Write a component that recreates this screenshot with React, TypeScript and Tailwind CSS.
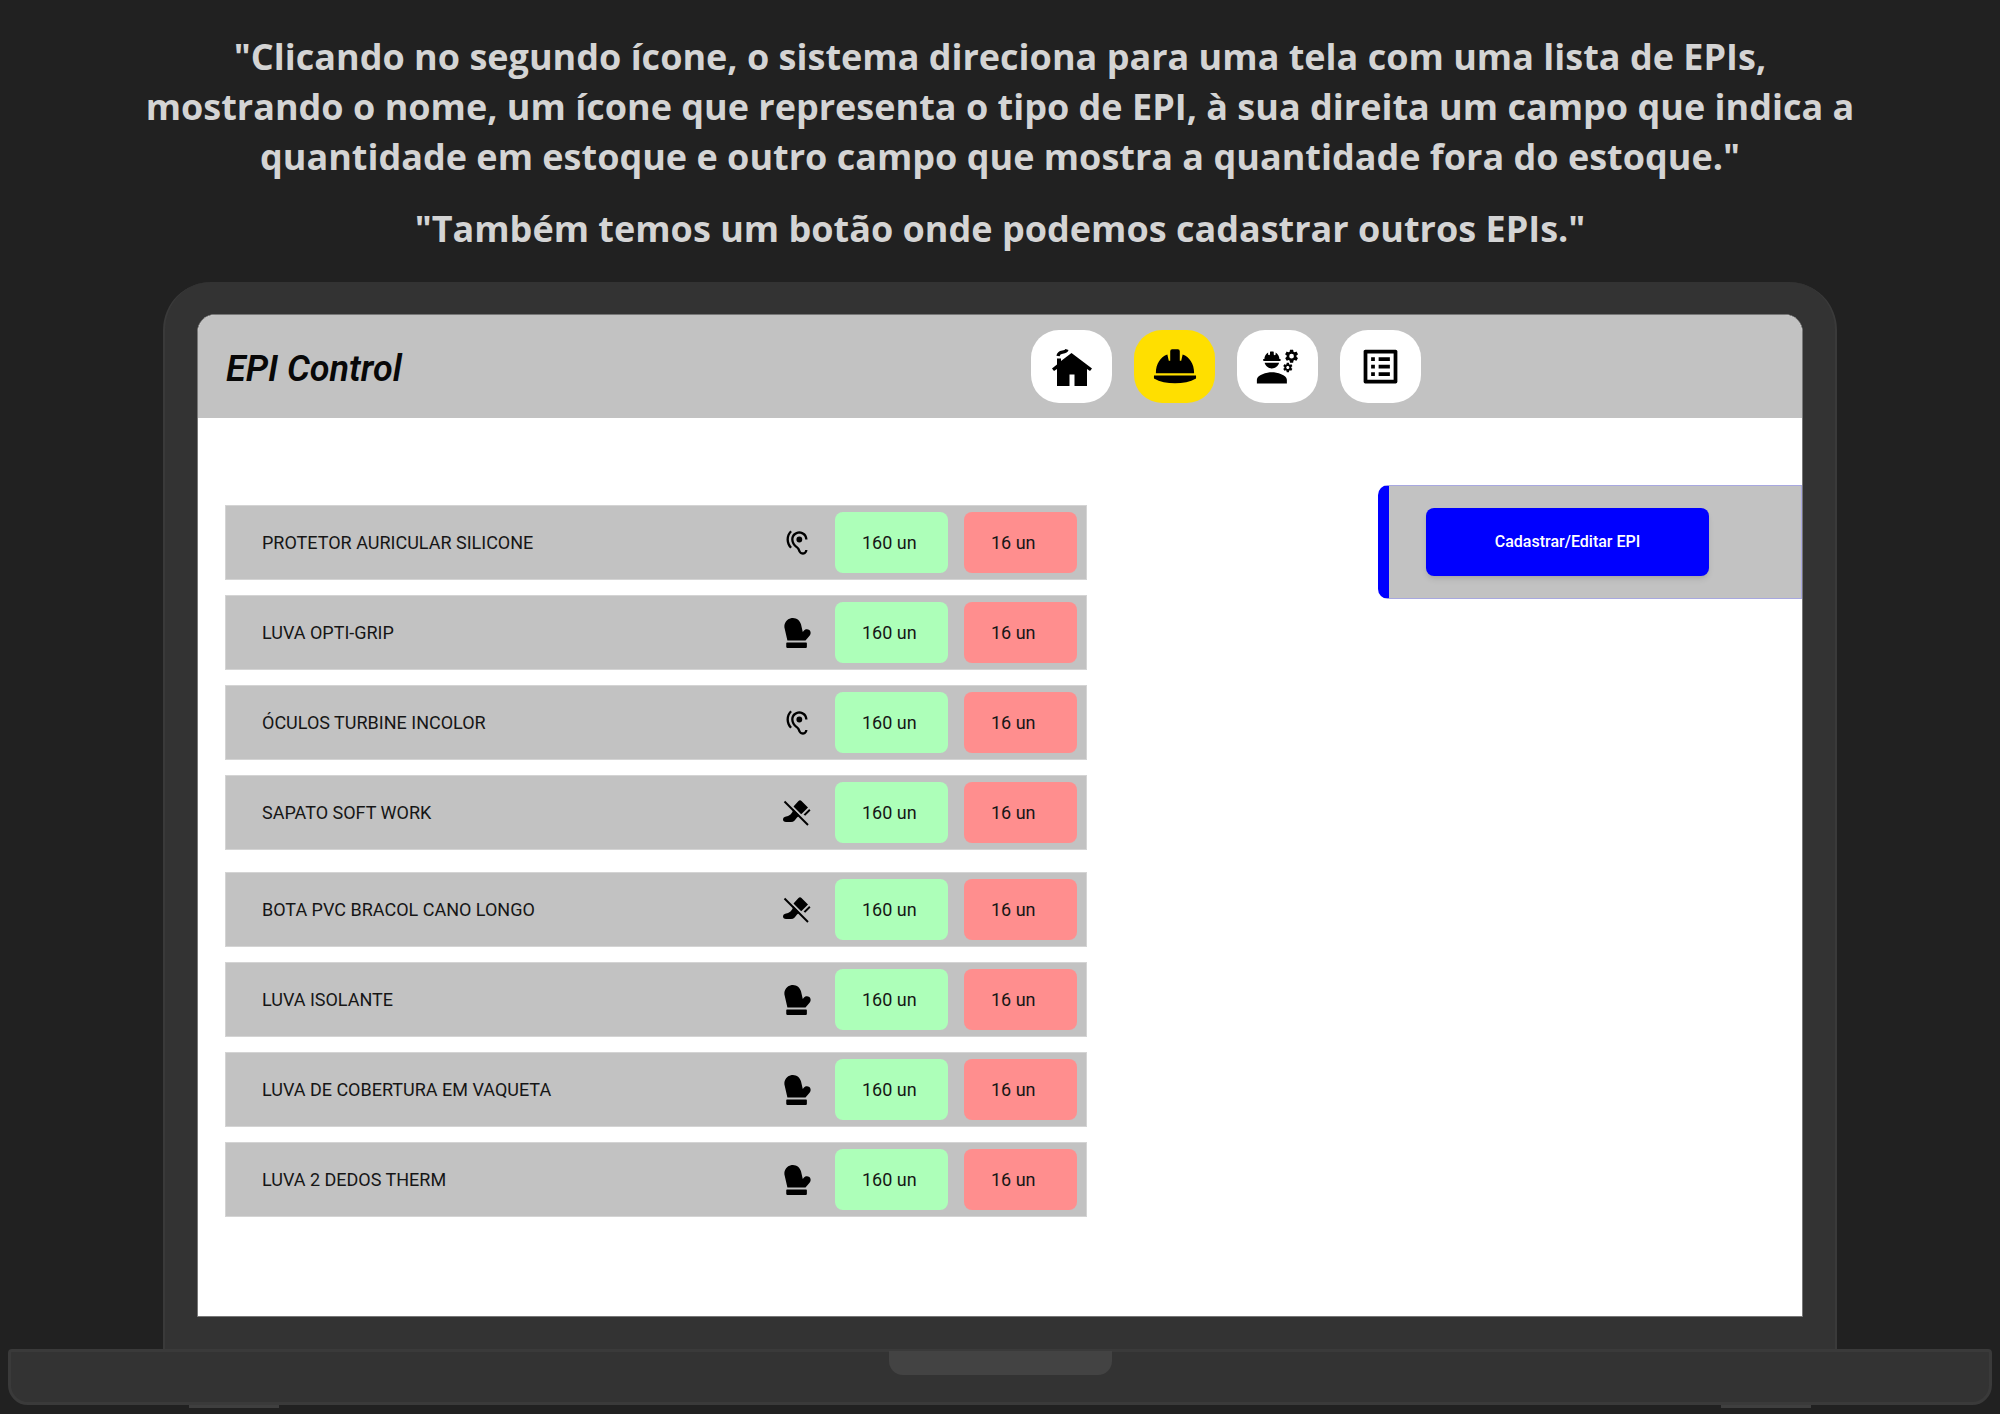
import { FaMitten } from "react-icons/fa";
import { MdEngineering, MdHearing, MdListAlt } from "react-icons/md";
import type { ReactNode } from "react";

type Kind = "ear" | "glove" | "boot";
type Epi = { name: string; kind: Kind };

const groups: Epi[][] = [
  [
    { name: "PROTETOR AURICULAR SILICONE", kind: "ear" },
    { name: "LUVA OPTI-GRIP", kind: "glove" },
    { name: "ÓCULOS TURBINE INCOLOR", kind: "ear" },
    { name: "SAPATO SOFT WORK", kind: "boot" },
  ],
  [
    { name: "BOTA PVC BRACOL CANO LONGO", kind: "boot" },
    { name: "LUVA ISOLANTE", kind: "glove" },
    { name: "LUVA DE COBERTURA EM VAQUETA", kind: "glove" },
    { name: "LUVA 2 DEDOS THERM", kind: "glove" },
  ],
];

function BootIcon() {
  return (
    <svg viewBox="0 0 28 28" className="size-7" fill="currentColor" aria-hidden="true">
      <path d="M10.500 7.500 15.500 2q1.500-1.500 3 0l6.500 6.500-6 6L14 18.500c-2 2.500-3 4.500-6 4.500H3c-4 0-4-5 0-5.500 3.500-.5 7-3.500 7-7z" />
      <path d="m26.200 10 1.300 1.400-5.300 5.300-1.600-1.300z" />
      <path d="m3 1.500 23.500 23.500" stroke="#c2c2c2" strokeWidth="2" />
      <path d="m1.500 2.500 23.500 23.500" stroke="currentColor" strokeWidth="2" />
    </svg>
  );
}

const kindIcons: Record<Kind, ReactNode> = {
  ear: <MdHearing className="size-7" />,
  glove: <FaMitten className="h-[30px] w-[27px]" />,
  boot: <BootIcon />,
};

function HomeIcon() {
  return (
    <svg viewBox="0 0 42 38" className="h-[38px] w-[42px]" fill="currentColor" aria-hidden="true">
      <path d="M20.500 5 41 20.500l-2 2.500-3-2V38H23.500V26.500h-5V38H6V21l-3 2-2-2.500 5-4V10.500h4V13z" />
      <path d="M7 8c.5-3 2.500-3.500 4.500-3.800s4-1 4.500-2.700" fill="none" stroke="currentColor" strokeWidth="3.200" />
    </svg>
  );
}

function HelmetIcon() {
  return (
    <svg viewBox="0 0 46 36" className="h-[35px] w-11" fill="currentColor" aria-hidden="true">
      <path d="M18 2q0-2 2-2h6q2 0 2 2v10h1.500L31 5.500C38 8 43 15 43 25H3C3 15 8 8 15 5.500L16.500 12H18z" />
      <path d="M1 27.500h44v3C39 34 31 35.500 23 35.500S7 34 1 30.500z" />
    </svg>
  );
}

const nav = [
  { label: "Início", icon: <HomeIcon />, active: false },
  { label: "EPIs", icon: <HelmetIcon />, active: true },
  { label: "Funcionários", icon: <MdEngineering className="size-[45px]" />, active: false },
  { label: "Relatórios", icon: <MdListAlt className="size-[45px]" />, active: false },
];

function Row({ name, kind }: Epi) {
  return (
    <li className="flex h-[75px] items-center border border-[#d4d4d4] bg-[#c2c2c2] pr-[9px] pl-9 text-lg">
      <span className="flex-1">{name}</span>
      <span className="mr-6 flex w-7 justify-center text-black">{kindIcons[kind]}</span>
      <span className="mr-4 flex h-[61px] w-[113px] items-center rounded-lg bg-[#adffb9] pl-[27px]">160 un</span>
      <span className="flex h-[61px] w-[113px] items-center rounded-lg bg-[#ff8e8e] pl-[27px]">16 un</span>
    </li>
  );
}

export default function App() {
  return (
    <div className="min-h-screen bg-[#212121] px-2 pt-8 pb-1">
      <div className="text-center font-['Open_Sans',sans-serif] text-4xl leading-[50px] font-bold text-[#d4d4d4]">
        <p>
          "Clicando no segundo ícone, o sistema direciona para uma tela com uma lista de EPIs,
          <br />
          mostrando o nome, um ícone que representa o tipo de EPI, à sua direita um campo que indica a
          <br />
          quantidade em estoque e outro campo que mostra a quantidade fora do estoque."
        </p>
        <p className="mt-[22px]">"Também temos um botão onde podemos cadastrar outros EPIs."</p>
      </div>

      <div className="mx-[155px] mt-7 rounded-t-[48px] border-x-2 border-[#3a3a3a] bg-[#333333] px-8 pt-8 pb-8">
        <div className="overflow-hidden rounded-t-[18px] border border-[#777777] bg-white font-[Roboto,sans-serif] text-[#161616]">
          <header className="flex h-[103px] items-center bg-[#c2c2c2] pl-7">
            <h1 className="w-[805px] pt-1 text-4xl font-semibold text-[#080808] italic">EPI Control</h1>
            <nav className="flex gap-[22px]">
              {nav.map((item) => (
                <button
                  key={item.label}
                  type="button"
                  aria-label={item.label}
                  className={
                    item.active
                      ? "flex h-[73px] w-[81px] items-center justify-center rounded-[28px] bg-[#ffdf00] text-black"
                      : "flex h-[73px] w-[81px] items-center justify-center rounded-[28px] bg-white text-black"
                  }
                >
                  {item.icon}
                </button>
              ))}
            </nav>
          </header>

          <main className="flex items-start justify-between pb-[99px] pl-[27px]">
            <div className="mt-[87px] flex w-[862px] flex-col gap-[22px]">
              {groups.map((group, i) => (
                <ul key={i} className="flex flex-col gap-[15px]">
                  {group.map((epi) => (
                    <Row key={epi.name} {...epi} />
                  ))}
                </ul>
              ))}
            </div>
            <aside className="mt-[67px] w-[424px] rounded-l-[10px] border border-l-[11px] border-[#a8a8e0] border-l-[#0000ff] bg-[#c2c2c2] py-[22px] pl-[37px]">
              <button
                type="button"
                className="h-[68px] w-[283px] rounded-lg bg-[#0000ff] text-base font-medium text-white shadow-md"
              >
                Cadastrar/Editar EPI
              </button>
            </aside>
          </main>
        </div>
      </div>

      <div className="flex h-14 justify-center rounded-t-[4px] rounded-b-[20px] border-[3px] border-[#3a3a3a] bg-[#333333]">
        <div className="-mt-px h-6 w-[223px] rounded-b-[14px] bg-[#434343]" />
      </div>
      <div className="flex justify-between px-[181px]">
        <div className="h-[3px] w-[90px] bg-[#3f3f3f]" />
        <div className="h-[3px] w-[90px] bg-[#3f3f3f]" />
      </div>
    </div>
  );
}
